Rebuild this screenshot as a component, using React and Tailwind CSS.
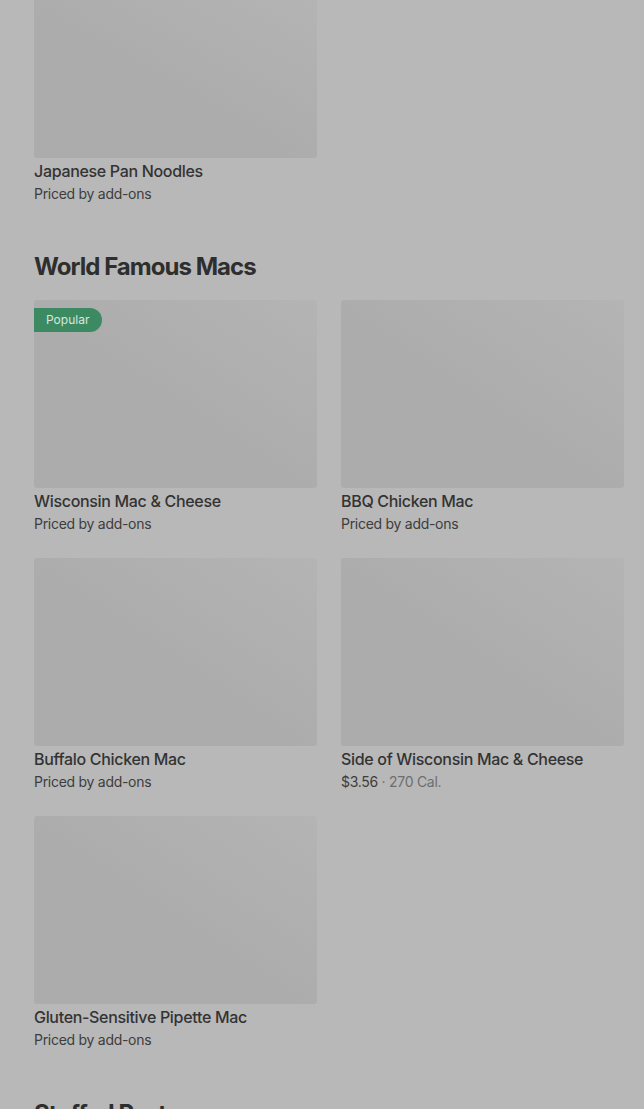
import React from 'react';

const macs = [
  { name: 'Wisconsin Mac & Cheese', popular: true },
  { name: 'BBQ Chicken Mac' },
  { name: 'Buffalo Chicken Mac' },
  { name: 'Side of Wisconsin Mac & Cheese', price: '$3.56', cal: '270 Cal.' },
  { name: 'Gluten-Sensitive Pipette Mac' },
];

function Placeholder({ className = '' }) {
  return (
    <div
      className={`w-full rounded-[3px] bg-gradient-to-tr from-[#acacac] from-45% to-[#b4b4b4] ${className}`}
    />
  );
}

function ItemCard({ item, imageClass = 'h-[188px]' }) {
  return (
    <div className="flex flex-col">
      <div className="relative">
        <Placeholder className={imageClass} />
        {item.popular && (
          <span className="absolute left-0 top-2 h-6 pl-3 pr-[13px] rounded-r-full bg-[#3c8a62] text-[#d9e7df] text-[12px] leading-6">
            Popular
          </span>
        )}
      </div>
      <p className="pt-px text-[16px] leading-6 font-medium tracking-[-0.02em] text-[#333333] truncate">
        {item.name}
      </p>
      {item.price ? (
        <p className="pt-px text-[14px] leading-5 tracking-[-0.02em] text-[#3d3d3d]">
          {item.price}
          <span className="text-[#6e6e6e]"> · {item.cal}</span>
        </p>
      ) : (
        <p className="pt-px text-[14px] leading-5 tracking-[-0.02em] text-[#3d3d3d]">Priced by add-ons</p>
      )}
    </div>
  );
}

function SectionHeading({ children }) {
  return (
    <h2 className="text-[24px] leading-7 font-bold tracking-[-0.04em] text-[#2e2e2e]">{children}</h2>
  );
}

export default function App() {
  return (
    <div
      className="h-[1109px] overflow-hidden bg-[#b8b8b8] pl-[34px] pr-[20px]"
      style={{ fontFamily: 'Inter, "Noto Sans", sans-serif' }}
    >
      <div className="grid grid-cols-2 gap-x-6">
        <ItemCard item={{ name: 'Japanese Pan Noodles' }} imageClass="h-[158px] rounded-t-none" />
      </div>

      <div className="mt-[49px] mb-[19px]">
        <SectionHeading>World Famous Macs</SectionHeading>
      </div>

      <div className="grid grid-cols-2 gap-x-6 gap-y-6">
        {macs.map((item) => (
          <ItemCard key={item.name} item={item} />
        ))}
      </div>

      <div className="mt-[50px]">
        <SectionHeading>Stuffed Pasta</SectionHeading>
      </div>
    </div>
  );
}
